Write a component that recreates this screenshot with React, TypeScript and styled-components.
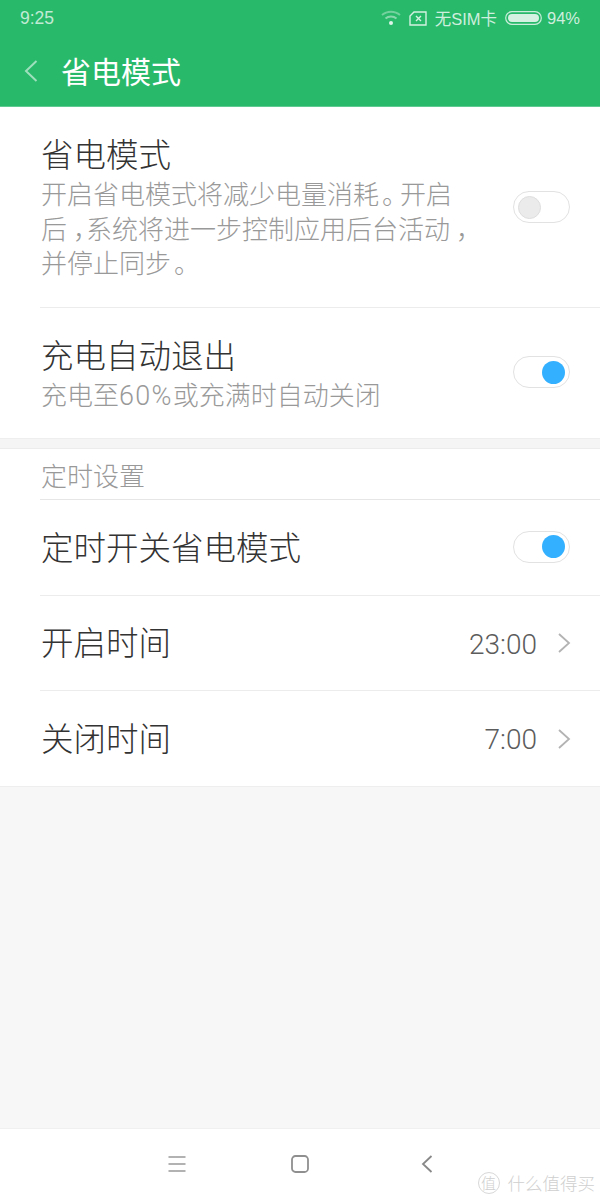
import React from 'react';
import styled, { createGlobalStyle } from 'styled-components';

const GlobalStyle = createGlobalStyle`
  html, body {
    margin: 0;
    padding: 0;
    background: #f7f7f7;
  }
  * {
    box-sizing: border-box;
  }
`;

const Page = styled.div`
  position: relative;
  width: 600px;
  height: 1200px;
  display: flex;
  flex-direction: column;
  background: #f7f7f7;
  font-family: "Liberation Sans", "Noto Sans CJK SC", sans-serif;
  overflow: hidden;
`;

const StatusBar = styled.div`
  height: 38px;
  flex-shrink: 0;
  display: flex;
  align-items: center;
  justify-content: space-between;
  padding: 0 20px 2px 20px;
  background: #28b96b;
  color: rgba(255, 255, 255, 0.72);
  font-size: 17.5px;
`;

const StatusRight = styled.div`
  display: flex;
  align-items: center;
  color: rgba(255, 255, 255, 0.78);
  font-size: 16.5px;
`;

const SimIcon = styled.svg`
  margin-left: 8px;
`;

const SimText = styled.span`
  margin: 0 8px;
`;

const Percent = styled.span`
  margin-left: 5px;
`;

const TitleBar = styled.div`
  height: 69px;
  flex-shrink: 0;
  display: flex;
  align-items: center;
  padding: 0 0 2px 24px;
  background: #28b96b;
  border-bottom: 1px solid #5fca91;
`;

const Title = styled.div`
  margin: 4px 0 0 23px;
  color: #fff;
  font-size: 30px;
  line-height: 40px;
`;

const Section = styled.div`
  background: #fff;
  border-bottom: 1px solid #eeeeee;
`;

const Row = styled.div<{ $height: number; $divider?: boolean }>`
  height: ${(p) => p.$height}px;
  display: flex;
  align-items: center;
  margin-left: 40px;
  padding: 0 30px 0 1px;
  border-bottom: ${(p) => (p.$divider ? '1px solid #ececec' : 'none')};
`;

const RowText = styled.div`
  flex: 1;
  min-width: 0;
`;

const RowTitle = styled.div`
  padding-top: 2px;
  color: #333333;
  font-size: 32.5px;
  font-weight: 300;
  line-height: 44px;
`;

const RowDesc = styled.div`
  color: #999999;
  font-size: 26px;
  font-weight: 300;
  line-height: 34.5px;
  white-space: nowrap;
`;

const Comma = styled.span`
  margin-left: 6px;
  letter-spacing: -13px;
`;

const Stop = styled.span`
  margin-left: 3px;
  letter-spacing: -8px;
`;

const Latin = styled.span`
  font-family: "Roboto", sans-serif;
  font-size: 27px;
  letter-spacing: 1.3px;
`;

const Gap = styled.div`
  height: 10px;
  background: #f5f5f5;
  border-bottom: 1px solid #ececec;
`;

const SectionLabel = styled.div`
  height: 51px;
  margin-left: 40px;
  padding: 10px 0 0 1px;
  color: #999999;
  font-size: 26px;
  font-weight: 300;
  line-height: 36px;
  border-bottom: 1px solid #e6e6e6;
`;

const Value = styled.span`
  color: #5c5c5c;
  font-family: "Roboto", sans-serif;
  font-size: 28px;
  font-weight: 300;
  margin: 2px 20px 0 0;
`;

const SwitchTrack = styled.div<{ $on?: boolean }>`
  width: 57px;
  height: 32px;
  margin-top: ${(p) => (p.$on ? '-2px' : '0')};
  border: 1px solid #e2e2e2;
  border-radius: 16px;
  background: #fff;
  display: flex;
  align-items: center;
  justify-content: ${(p) => (p.$on ? 'flex-end' : 'flex-start')};
  padding: 0 4px;
`;

const SwitchKnob = styled.div<{ $on?: boolean }>`
  width: 23px;
  height: 23px;
  border-radius: 50%;
  background: ${(p) => (p.$on ? '#33b0ff' : '#ebebeb')};
  border: ${(p) => (p.$on ? 'none' : '1px solid #dedede')};
`;

const Spacer = styled.div`
  flex: 1;
`;

const ChevronIcon = styled.svg`
  margin-right: -1px;
`;

const NavBar = styled.div`
  height: 72px;
  flex-shrink: 0;
  display: flex;
  align-items: flex-start;
  gap: 105px;
  padding: 26px 0 0 168px;
  background: #fff;
  border-top: 1px solid #f0f0f0;
`;

const NavBack = styled.svg`
  margin-left: 7px;
`;

const Watermark = styled.div`
  position: absolute;
  right: 5px;
  bottom: 5px;
  display: flex;
  align-items: center;
  gap: 8px;
  color: #cfcfcf;
  font-size: 17.5px;
  font-weight: 300;
`;

const WatermarkBadge = styled.span`
  width: 22px;
  height: 22px;
  border: 1px solid #d8d8d8;
  border-radius: 50%;
  display: flex;
  align-items: center;
  justify-content: center;
  font-size: 15px;
`;

const Switch = ({ on }: { on?: boolean }) => (
  <SwitchTrack $on={on}>
    <SwitchKnob $on={on} />
  </SwitchTrack>
);

const Chevron = () => (
  <ChevronIcon width="14" height="22" viewBox="0 0 14 22" fill="none">
    <path d="M2 2l10 9-10 9" stroke="#b3b3b3" strokeWidth="1.8" />
  </ChevronIcon>
);

export default function App() {
  return (
    <>
      <GlobalStyle />
      <Page>
        <StatusBar>
          <span>9:25</span>
          <StatusRight>
            <svg width="20" height="16" viewBox="0 0 20 16" fill="none">
              <path d="M1 5c5-4.500 13-4.500 18 0" stroke="rgba(255,255,255,.35)" strokeWidth="2" />
              <path d="M4.500 8.500c3-2.700 8-2.700 11 0" stroke="rgba(255,255,255,.45)" strokeWidth="2" />
              <circle cx="10" cy="13" r="2" fill="rgba(255,255,255,.85)" />
            </svg>
            <SimIcon width="18" height="15" viewBox="0 0 18 15" fill="none">
              <path d="M5 1h12v13H1V5z" stroke="rgba(255,255,255,.8)" strokeWidth="1.4" />
              <path d="M7 5l5 5M12 5l-5 5" stroke="rgba(255,255,255,.8)" strokeWidth="1.4" />
            </SimIcon>
            <SimText>无SIM卡</SimText>
            <svg width="37" height="14" viewBox="0 0 37 14" fill="none">
              <rect x="0.700" y="0.700" width="35.600" height="12.600" rx="6.300" stroke="rgba(255,255,255,.75)" strokeWidth="1.2" />
              <rect x="3" y="3" width="31" height="8" rx="4" fill="rgba(255,255,255,.8)" />
            </svg>
            <Percent>94%</Percent>
          </StatusRight>
        </StatusBar>
        <TitleBar>
          <svg width="14" height="24" viewBox="0 0 14 24" fill="none">
            <path d="M12.500 2L2 12l10.500 10" stroke="rgba(255,255,255,.55)" strokeWidth="2" />
          </svg>
          <Title>省电模式</Title>
        </TitleBar>
        <Section>
          <Row $height={201} $divider>
            <RowText>
              <RowTitle>省电模式</RowTitle>
              <RowDesc>
                开启省电模式将减少电量消耗<Stop>。</Stop>开启
                <br />
                后<Comma>，</Comma>系统将进一步控制应用后台活动<Comma>，</Comma>
                <br />
                并停止同步<Stop>。</Stop>
              </RowDesc>
            </RowText>
            <Switch />
          </Row>
          <Row $height={130}>
            <RowText>
              <RowTitle>充电自动退出</RowTitle>
              <RowDesc>充电至<Latin>60%</Latin>或充满时自动关闭</RowDesc>
            </RowText>
            <Switch on />
          </Row>
        </Section>
        <Gap />
        <Section>
          <SectionLabel>定时设置</SectionLabel>
          <Row $height={96} $divider>
            <RowTitle>定时开关省电模式</RowTitle>
            <Spacer />
            <Switch on />
          </Row>
          <Row $height={95} $divider>
            <RowTitle>开启时间</RowTitle>
            <Spacer />
            <Value>23:00</Value>
            <Chevron />
          </Row>
          <Row $height={95}>
            <RowTitle>关闭时间</RowTitle>
            <Spacer />
            <Value>7:00</Value>
            <Chevron />
          </Row>
        </Section>
        <Spacer />
        <NavBar>
          <svg width="18" height="18" viewBox="0 0 18 18" fill="none">
            <path d="M0.500 2h17M0.500 9h17M0.500 16h17" stroke="#999" strokeWidth="1.6" />
          </svg>
          <svg width="18" height="18" viewBox="0 0 18 18" fill="none">
            <rect x="1" y="1" width="16" height="16" rx="3.500" stroke="#8f8f8f" strokeWidth="1.8" />
          </svg>
          <NavBack width="12" height="18" viewBox="0 0 12 18" fill="none">
            <path d="M10.500 1L2 9l8.500 8" stroke="#888" strokeWidth="1.800" />
          </NavBack>
        </NavBar>
        <Watermark>
          <WatermarkBadge>值</WatermarkBadge>
          <span>什么值得买</span>
        </Watermark>
      </Page>
    </>
  );
}
